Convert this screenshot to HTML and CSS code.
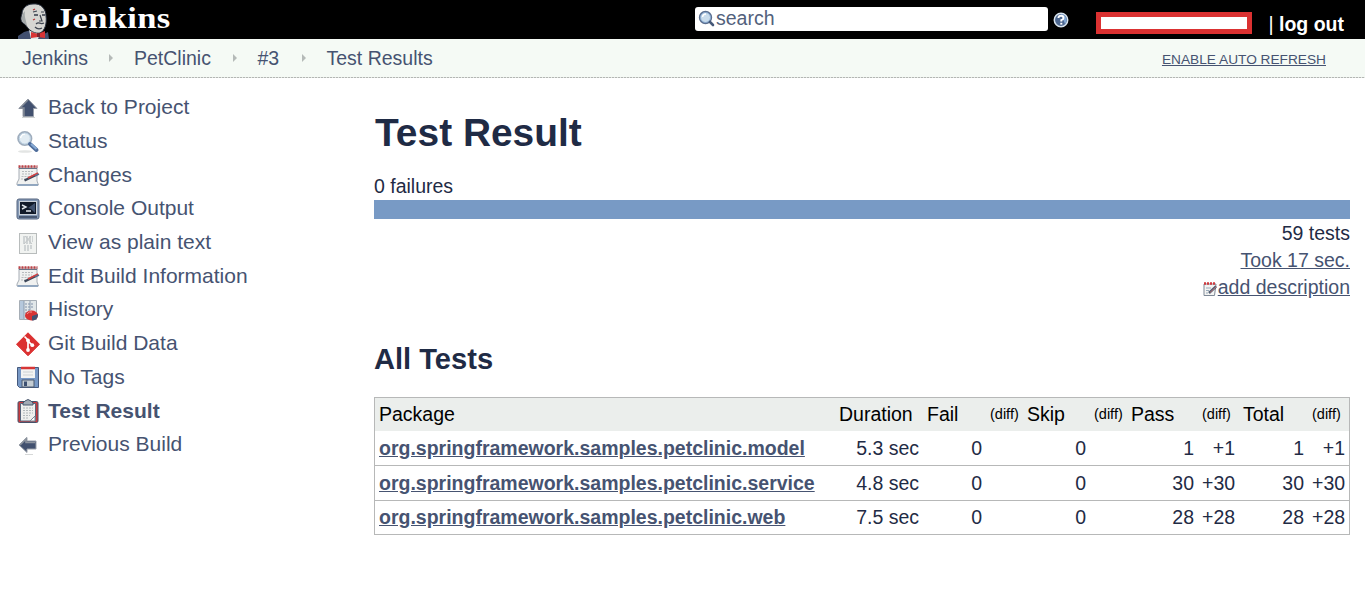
FILE: index.html
```html
<!DOCTYPE html>
<html lang="en">
<head>
<meta charset="utf-8">
<title>PetClinic #3 Test Results [Jenkins]</title>
<link rel="stylesheet" href="styles.css">
</head>
<body>
<header class="header">
  <a class="brand">
    <svg class="butler" viewBox="0 0 33 36" width="33" height="36">
      <path d="M0 36V33L6 29L13 27L24 32L30 29L31 36Z" fill="#42506f"/>
      <path d="M11 27L13 36H20L22 31Z" fill="#dfe3e4"/>
      <path d="M5 20C2 17 3 14 4 11C4 5 9 1 15 1C23 0 28 6 28 13C29 20 27 28 22 30C17 31 12 28 9 24C8 22 7 21 5 20Z" fill="#d6d6d2" stroke="#2c3442"/>
      <path d="M7 8C6 14 8 16 9 23L5 19C3 16 4 11 7 8Z" fill="#a3a8a8"/>
      <path d="M15 9L19 8M23 9L26 9M18 21C21 18 22 22 26 20M17 24Q20 27 24 25M22 12L24 18L21 18" fill="none" stroke="#3d4450" stroke-width="1.2"/>
      <path d="M16 12H20M24 12H27" stroke="#333b49" stroke-width="1.5"/>
      <path d="M15 7L17 6M15 17L17 16" stroke="#b9383a" stroke-width="1.3"/>
      <path d="M13 29L20 31L27 28V35L20 34L13 35Z" fill="#d93435"/>
      <path d="M19 30H22V34H19Z" fill="#7d242e"/>
    </svg>
    <span class="wordmark">Jenkins</span>
  </a>
  <div class="search">
    <svg viewBox="0 0 18 18" width="18" height="18">
      <circle cx="7.5" cy="7.5" r="5.9" fill="#c9dcec" stroke="#5c6f8f" stroke-width="1.6"/>
      <circle cx="7.5" cy="7.5" r="5" fill="none" stroke="#86a9d1"/>
      <path d="M4.5 7Q5 4 8 4" fill="none" stroke="#fff" stroke-width="1.5"/>
      <path d="M12 12L15 15" stroke="#455878" stroke-width="2.6" stroke-linecap="round"/>
    </svg>
    <span>search</span>
  </div>
  <svg class="help" viewBox="0 0 16 16" width="16" height="16">
    <circle cx="8" cy="8" r="6.7" fill="#4d6790" stroke="#d9e4ee" stroke-width="1.5"/>
    <path d="M8 2A6 6 0 0 1 12 12Z" fill="#82a7d4"/>
    <path d="M5.4 6Q5.6 3.8 8 3.8Q10.5 3.8 10.5 5.9Q10.5 7.2 8.3 8.2V9.6" fill="none" stroke="#fff" stroke-width="1.9"/>
    <path d="M7.3 10.8H9.3V12.6H7.3Z" fill="#fff"/>
  </svg>
  <div class="user-box"></div>
  <div class="logout">| <b>log out</b></div>
</header>

<nav class="crumbs">
  <a class="crumb c1">Jenkins</a><i class="arrow"></i>
  <a class="crumb c2">PetClinic</a><i class="arrow"></i>
  <a class="crumb c3">#3</a><i class="arrow"></i>
  <a class="crumb c4">Test Results</a>
  <a class="refresh">ENABLE AUTO REFRESH</a>
</nav>

<svg width="0" height="0" class="defs">
  <symbol id="notepad" viewBox="0 0 24 24">
    <path d="M3 4H21V18L22.5 22H1V20L3 16Z" fill="#f0f1f0" stroke="#a6adb5"/>
    <path d="M2.5 3.5H21.5" stroke="#bd4145" stroke-width="2.4" stroke-dasharray="2 1"/>
    <path d="M3 5.5H21" stroke="#687386"/>
    <path d="M6 8.5H18M6 11H16M5.5 13.5H13M5 16H10" stroke="#b7bbbd" stroke-dasharray="2 1"/>
    <path d="M1.5 22H22" stroke="#8ba2bd" stroke-width="1.8"/>
    <path d="M8.5 17.5L19 12.3" stroke="#3c4658" stroke-width="2.4"/>
    <path d="M12 15L22 10" stroke="#d34041" stroke-width="1.8"/>
    <path d="M19 13L23 11" stroke="#54698a" stroke-width="1.5"/>
  </symbol>
</svg>

<main class="layout">
  <aside class="tasks">
    <a class="task"><svg viewBox="0 0 24 24"><path d="M12 3L21 12.5H17.5V20.5H7V12.5H3Z" fill="#42516f" stroke="#989ea9"/><path d="M12 4L4 12H8V20" fill="none" stroke="#858c98" stroke-width="1.4"/><path d="M6 21.5H19" stroke="#cfd2d2"/></svg><span>Back to Project</span></a>
    <a class="task"><svg viewBox="0 0 24 24"><ellipse cx="9" cy="21.5" rx="7" ry="1.3" fill="#e3e5e4"/><circle cx="8.8" cy="8.5" r="6.7" fill="#e2ecf3" stroke="#9fadbd" stroke-width="1.8"/><path d="M4.5 8Q5 4 9 4" fill="none" stroke="#fff" stroke-width="1.7"/><circle cx="8.8" cy="8.5" r="5.5" fill="none" stroke="#bcd1e3"/><path d="M14 14L20.5 20" stroke="#4f6d9b" stroke-width="4" stroke-linecap="round"/><path d="M15 14L20.5 19" stroke="#86aad5" stroke-width="2"/></svg><span>Status</span></a>
    <a class="task"><svg><use href="#notepad"/></svg><span>Changes</span></a>
    <a class="task"><svg viewBox="0 0 24 24"><rect x="1" y="2" width="22" height="20" rx="2" fill="#8498b4" stroke="#566681"/><rect x="3.5" y="4.5" width="17" height="13" fill="#111a29" stroke="#cbd2da"/><path d="M6 8L10 10L6 12M10 14H15" fill="none" stroke="#e0e5ea" stroke-width="1.4"/><path d="M12 11L19 6V16L15 12Z" fill="#40516d"/><path d="M3 20H21" stroke="#35435d" stroke-width="1.5"/></svg><span>Console Output</span></a>
    <a class="task"><svg viewBox="0 0 24 24"><rect x="3.5" y="2.5" width="17" height="20" fill="#f1f3f1" stroke="#b8bcbc"/><path d="M7 6H17M7 8H17M7 10H17M7 12H16M8 15H17M8 17H16M8 19H14" stroke="#aeb5b9" stroke-dasharray="2 1"/><path d="M9 5L16 13M15 5L8 13" stroke="#c3c7c8"/></svg><span>View as plain text</span></a>
    <a class="task"><svg><use href="#notepad"/></svg><span>Edit Build Information</span></a>
    <a class="task"><svg viewBox="0 0 24 24"><path d="M3.5 2.5H20.5V21.5H3.5Z" fill="#e1e7e9" stroke="#a6aeb6"/><path d="M4 3H8V21H4Z" fill="#b5c8dc"/><path d="M9 6H18M9 9H18M9 12H15M9 15H12M9 18H11" stroke="#8091aa" stroke-dasharray="2 1"/><path d="M8 3V21M14 3V12" stroke="#8b9caf"/><ellipse cx="15.5" cy="17.5" rx="6.5" ry="4.9" fill="#d83334"/><path d="M16 18L22 16C22 20 20 22.5 16 22.5Z" fill="#425373"/><path d="M11 16Q13 13 16 14" fill="none" stroke="#ef9690"/></svg><span>History</span></a>
    <a class="task"><svg viewBox="0 0 24 24"><path d="M12 .8L23.5 12.3L12 23.8L.5 12.3Z" fill="#db3131" stroke="#db3131" stroke-linejoin="round"/><path d="M8.5 4.5L12 8V18M12 9L16.3 13.3" fill="none" stroke="#fff" stroke-width="1.7"/><circle cx="12" cy="8.5" r="1.9" fill="#fff"/><circle cx="12" cy="18" r="1.9" fill="#fff"/><circle cx="16.3" cy="13.2" r="1.9" fill="#fff"/></svg><span>Git Build Data</span></a>
    <a class="task"><svg viewBox="0 0 24 24"><path d="M1.5 2.5H22.5V22.5H3.5L1.5 20.5Z" fill="#7798c5" stroke="#45597d"/><path d="M5 2H19V13H5Z" fill="#f3f4f3"/><path d="M5 3H19" stroke="#d63637" stroke-width="2.5"/><path d="M7 7H17M7 10H17" stroke="#cdd2d4"/><path d="M6 15H18V22H6Z" fill="#c5cdd3" stroke="#4c5a71"/><path d="M8 16.5H11V21H8Z" fill="#3d5071"/></svg><span>No Tags</span></a>
    <a class="task current"><svg viewBox="0 0 24 24"><rect x="2" y="2.5" width="20" height="21" rx="1.5" fill="#c83b3e" stroke="#45526b"/><path d="M4.5 4.5H19.5V22H4.5Z" fill="#eff0ee" stroke="#59677c"/><path d="M7 4L9 2Q12-1 15 2L17 4V6H7Z" fill="#a2abb5" stroke="#48566c"/><path d="M7 9H17M7 11.5H17M7 14H17M7 16.5H14M7 19H13" stroke="#b2b8ba" stroke-dasharray="2 1"/><path d="M14 22L19 17V22Z" fill="#fff" stroke="#7c8794"/></svg><span>Test Result</span></a>
    <a class="task"><svg viewBox="0 0 24 24"><path d="M3 12L11 4.5V8H20V16H11V19.5Z" fill="#42516f" stroke="#9ba1aa"/><path d="M4 12L10 6V9.5H19" fill="none" stroke="#8d949e" stroke-width="1.6"/><path d="M9 21.5H17" stroke="#d6d8d8"/></svg><span>Previous Build</span></a>
  </aside>

  <section class="content">
    <h1>Test Result</h1>
    <div class="failures">0 failures</div>
    <div class="bar"></div>
    <div class="summary">
      <span>59 tests</span>
      <span><a>Took 17 sec.</a></span>
      <span class="describe"><svg viewBox="0 0 16 16" width="16" height="16"><path d="M2 3H14L12.5 14.5H2Z" fill="#f4f4f2" stroke="#7e8997"/><path d="M2 2.5H14" stroke="#d03a3e" stroke-width="2.6" stroke-dasharray="2 1"/><path d="M4 7H9M4 9.5H7M4 12H6" stroke="#9aabbb"/><path d="M7 12L14 5.5" stroke="#4e5c72" stroke-width="2.5"/><path d="M8 11.5L14.5 5.5" stroke="#bd7475"/></svg><a>add description</a></span>
    </div>
    <h2>All Tests</h2>
    <table class="results">
      <colgroup><col class="w-name"><col class="w-dur"><col class="w-fail"><col class="w-fd"><col class="w-skip"><col class="w-sd"><col class="w-pass"><col class="w-pd"><col class="w-total"><col class="w-td"></colgroup>
      <thead><tr><th>Package</th><th>Duration</th><th>Fail</th><th class="diff">(diff)</th><th>Skip</th><th class="diff">(diff)</th><th>Pass</th><th class="diff">(diff)</th><th>Total</th><th class="diff">(diff)</th></tr></thead>
      <tbody>
        <tr><td><a>org.springframework.samples.petclinic.model</a></td><td>5.3 sec</td><td>0</td><td></td><td>0</td><td></td><td>1</td><td>+1</td><td>1</td><td>+1</td></tr>
        <tr><td><a>org.springframework.samples.petclinic.service</a></td><td>4.8 sec</td><td>0</td><td></td><td>0</td><td></td><td>30</td><td>+30</td><td>30</td><td>+30</td></tr>
        <tr><td><a>org.springframework.samples.petclinic.web</a></td><td>7.5 sec</td><td>0</td><td></td><td>0</td><td></td><td>28</td><td>+28</td><td>28</td><td>+28</td></tr>
      </tbody>
    </table>
  </section>
</main>
</body>
</html>
```
FILE: styles.css
```css
* { box-sizing: border-box; }
body {
  margin: 0;
  height: 601px;
  overflow: hidden;
  background: #fff;
  color: #1f2b45;
  font: 19.5px/27px "Liberation Sans", Arial, sans-serif;
}
.defs { display: block; }

/* Top bar */
.header { display: flex; height: 39px; background: #000; color: #fff; align-items: flex-start; }
.brand { display: flex; width: 695px; padding-left: 18px; }
.butler { margin-top: 3px; }
.wordmark {
  margin-left: 4px;
  font: bold 30px/36px "Liberation Serif", serif;
  letter-spacing: 0.3px;
  transform: scaleX(1.15);
  transform-origin: left center;
}
.search {
  display: flex;
  align-items: center;
  width: 353px;
  height: 24px;
  margin-top: 7px;
  padding-left: 3px;
  background: #fff;
  border-radius: 3px;
  color: #52617c;
  line-height: 22px;
}
.search span { margin-top: -2px; }
.help { margin: 12px 0 0 5px; }
.user-box { width: 156px; height: 22px; margin: 12px 0 0 27px; background: #fff; border: 5px solid #db3131; }
.logout { margin: 11px 0 0 16.5px; white-space: nowrap; }

/* Breadcrumbs */
.crumbs {
  display: flex;
  align-items: center;
  height: 39px;
  padding: 0 0 1px 22px;
  background: repeating-linear-gradient(90deg, #b3b6b3 0 2px, #e3e7e3 2px 3px) bottom / 100% 1px no-repeat #f5faf5;
  color: #465371;
}
.crumb { line-height: 38px; white-space: nowrap; }
.arrow { width: 0; height: 0; border: 4px solid transparent; border-left-color: #b5bab8; border-right: 0; }
.c1 { width: 87px; }
.c2 { width: 99px; margin-left: 21px; }
.c3 { width: 44px; margin-left: 20.5px; }
.c4 { margin-left: 21px; }
.refresh { margin: 3px 39px 0 auto; font-size: 13.7px; text-decoration: underline; }

/* Page columns */
.layout { display: flex; }
.tasks { width: 374px; padding: 12px 0 0 16px; color: #465371; font-size: 21px; }
.task { display: flex; align-items: center; height: 33.7px; gap: 8px; }
.task svg { width: 24px; height: 24px; margin-top: 2px; }
.task span { line-height: 30px; margin-top: 1px; white-space: nowrap; }
.task.current { font-weight: bold; }

.content { width: 976px; }
h1 { margin: 32px 0 0 1px; font-size: 38.9px; line-height: 46px; }
.failures { margin-top: 17px; }
.bar { height: 19px; background: #789ac5; }
.summary { display: flex; flex-direction: column; align-items: flex-end; padding-top: 1px; }
.summary a { color: #465371; text-decoration: underline; }
.describe { display: flex; }
.describe svg { margin-top: 7px; }
h2 { margin: 41px 0 0; font-size: 29.1px; line-height: 34px; }

/* Results table */
.results { width: 976px; margin-top: 21px; table-layout: fixed; border-collapse: separate; border-spacing: 0; border: 1px solid #b7b8b8; }
.results th { height: 33px; padding: 0 4px; background: #ebeeec; color: #000; font-weight: normal; text-align: left; white-space: nowrap; }
.results .diff { font-size: 14.5px; }
.results td { height: 35px; padding: 0 4px; text-align: right; white-space: nowrap; border-bottom: 1px solid #b7b8b8; }
.results tbody tr:last-child td { height: 33px; border-bottom: 0; }
.results td:first-child { text-align: left; }
.results a { color: #465371; font-weight: bold; text-decoration: underline; }
.w-name { width: 460px; }
.w-dur { width: 88px; }
.w-fail { width: 63px; }
.w-fd { width: 37px; }
.w-skip { width: 67px; }
.w-sd { width: 37px; }
.w-pass { width: 71px; }
.w-pd { width: 41px; }
.w-total { width: 69px; }
.w-td { width: 41px; }
```
